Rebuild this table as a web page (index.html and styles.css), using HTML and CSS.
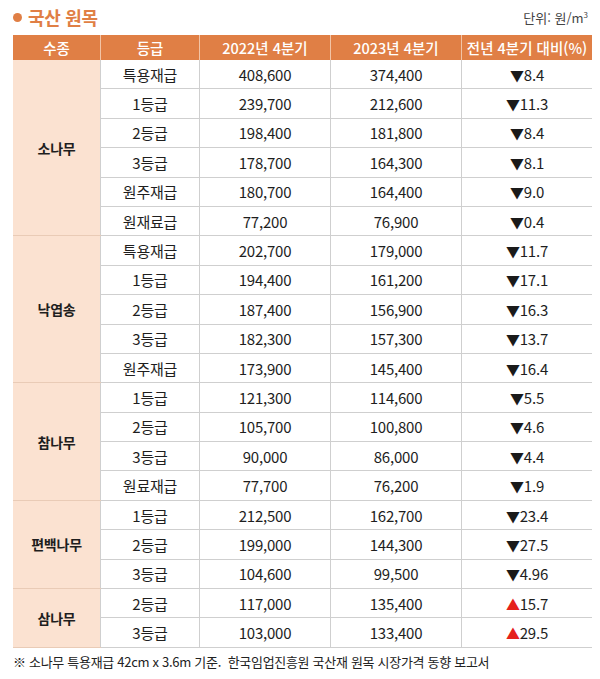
FILE: index.html
```html
<!DOCTYPE html>
<html lang="ko">
<head>
<meta charset="utf-8">
<link rel="stylesheet" href="styles.css">
</head>
<body>
<div class="page">
  <div class="top">
    <h1 class="title"><span class="dot"></span>국산 원목</h1>
    <div class="unit">단위: 원/m<sup>3</sup></div>
  </div>
  <table class="tbl">
    <thead>
      <tr><th class="c1">수종</th><th class="c2">등급</th><th class="c3">2022년 4분기</th><th class="c4">2023년 4분기</th><th class="c5">전년 4분기 대비(%)</th></tr>
    </thead>
    <tbody>
      <tr class="gstart"><td class="sp" rowspan="6">소나무</td><td>특용재급</td><td>408,600</td><td>374,400</td><td><span class="dn">▼</span>8.4</td></tr>
      <tr><td>1등급</td><td>239,700</td><td>212,600</td><td><span class="dn">▼</span>11.3</td></tr>
      <tr><td>2등급</td><td>198,400</td><td>181,800</td><td><span class="dn">▼</span>8.4</td></tr>
      <tr><td>3등급</td><td>178,700</td><td>164,300</td><td><span class="dn">▼</span>8.1</td></tr>
      <tr><td>원주재급</td><td>180,700</td><td>164,400</td><td><span class="dn">▼</span>9.0</td></tr>
      <tr><td>원재료급</td><td>77,200</td><td>76,900</td><td><span class="dn">▼</span>0.4</td></tr>
      <tr class="gstart"><td class="sp" rowspan="5">낙엽송</td><td>특용재급</td><td>202,700</td><td>179,000</td><td><span class="dn">▼</span>11.7</td></tr>
      <tr><td>1등급</td><td>194,400</td><td>161,200</td><td><span class="dn">▼</span>17.1</td></tr>
      <tr><td>2등급</td><td>187,400</td><td>156,900</td><td><span class="dn">▼</span>16.3</td></tr>
      <tr><td>3등급</td><td>182,300</td><td>157,300</td><td><span class="dn">▼</span>13.7</td></tr>
      <tr><td>원주재급</td><td>173,900</td><td>145,400</td><td><span class="dn">▼</span>16.4</td></tr>
      <tr class="gstart"><td class="sp" rowspan="4">참나무</td><td>1등급</td><td>121,300</td><td>114,600</td><td><span class="dn">▼</span>5.5</td></tr>
      <tr><td>2등급</td><td>105,700</td><td>100,800</td><td><span class="dn">▼</span>4.6</td></tr>
      <tr><td>3등급</td><td>90,000</td><td>86,000</td><td><span class="dn">▼</span>4.4</td></tr>
      <tr><td>원료재급</td><td>77,700</td><td>76,200</td><td><span class="dn">▼</span>1.9</td></tr>
      <tr class="gstart"><td class="sp" rowspan="3">편백나무</td><td>1등급</td><td>212,500</td><td>162,700</td><td><span class="dn">▼</span>23.4</td></tr>
      <tr><td>2등급</td><td>199,000</td><td>144,300</td><td><span class="dn">▼</span>27.5</td></tr>
      <tr><td>3등급</td><td>104,600</td><td>99,500</td><td><span class="dn">▼</span>4.96</td></tr>
      <tr class="gstart"><td class="sp" rowspan="2">삼나무</td><td>2등급</td><td>117,000</td><td>135,400</td><td><span class="up">▲</span>15.7</td></tr>
      <tr><td>3등급</td><td>103,000</td><td>133,400</td><td><span class="up">▲</span>29.5</td></tr>
    </tbody>
  </table>
  <p class="note">※ 소나무 특용재급 42cm x 3.6m 기준.&nbsp; 한국임업진흥원 국산재 원목 시장가격 동향 보고서</p>
</div>
</body>
</html>
```

FILE: styles.css
```css
html, body {
  margin: 0;
  padding: 0;
  background: #ffffff;
}
body {
  font-family: "Noto Sans CJK KR", "Noto Sans", sans-serif;
  color: #222;
}
.page {
  padding: 0 12px 0 13px;
  width: 575px;
}
.top {
  display: flex;
  justify-content: space-between;
  align-items: flex-end;
  height: 35px;
}
.title {
  margin: 0 0 7px 0;
  font-size: 18px;
  font-weight: 700;
  color: #e07f45;
  display: flex;
  align-items: center;
  letter-spacing: -0.3px;
  line-height: 22px;
}
.dot {
  display: inline-block;
  width: 9px;
  height: 9px;
  border-radius: 50%;
  background: #e07f45;
  margin-right: 6px;
}
.unit {
  font-size: 13px;
  color: #444;
  margin: 0 0 9px 0;
  line-height: 16px;
}
.unit sup {
  font-size: 8px;
  vertical-align: 5px;
  line-height: 0;
}
.tbl {
  width: 575px;
  border-collapse: collapse;
  table-layout: fixed;
}
.tbl th {
  background: #e07f45;
  color: #fff;
  font-weight: 500;
  font-size: 14.5px;
  height: 25px;
  padding: 0;
  border-left: 1px solid #f2c4a6;
  text-align: center;
}
.tbl th:first-child {
  border-left: none;
}
.c1 { width: 87px; }
.c2 { width: 98px; }
.c3 { width: 130px; }
.c4 { width: 130px; }
.c5 { width: 130px; }
.tbl td {
  height: 28.4px;
  padding: 0;
  font-size: 15px;
  text-align: center;
  border-bottom: 1px solid #cfcfcf;
  border-left: 1px solid #cfcfcf;
  color: #1e1e1e;
  letter-spacing: -0.2px;
}
.tbl td.sp {
  background: #fbe2d1;
  border-left: none;
  border-bottom: 1px solid #e9cbb6;
  font-weight: 700;
  font-size: 14px;
}
.dn {
  color: #1a1a1a;
  font-size: 14px;
}
.up {
  color: #e5211d;
  font-size: 14px;
}
.note {
  margin: 4px 0 0 0;
  font-size: 13px;
  color: #222;
  letter-spacing: -0.3px;
}
```
